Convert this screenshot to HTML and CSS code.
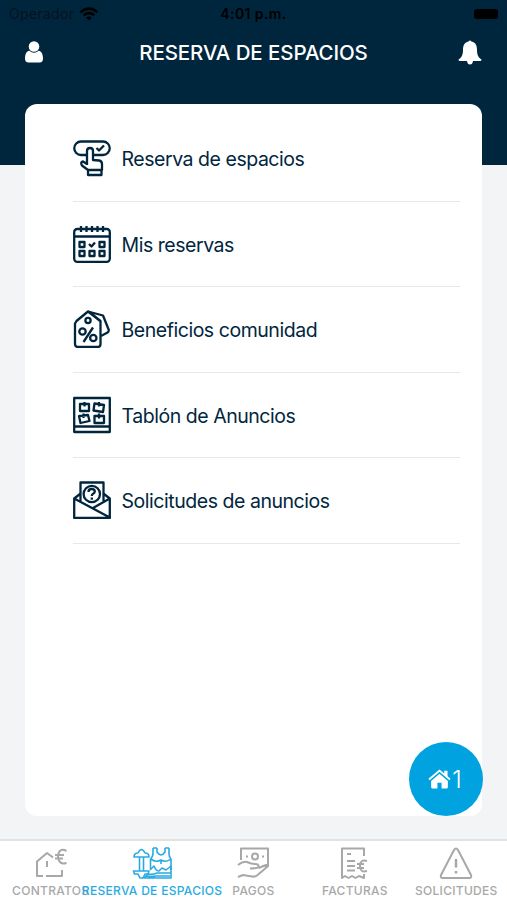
FILE: index.html
```html
<!DOCTYPE html>
<html lang="es">
<head>
    <meta charset="UTF-8">
    <meta name="viewport" content="width=device-width, initial-scale=1.0">
    <title>Reserva de espacios</title>
    <link rel="stylesheet" href="styles.css">
</head>
<body>
    <div class="app">
        <header class="header">
            <div class="status-bar">
                <div class="carrier">
                    <span>Operador</span>
                    <svg width="20" height="14" viewBox="0 0 20 14" fill="none" stroke="#000" stroke-width="2.5">
                        <path d="M1.5 5.2Q10-2 18.500 5.200M4.700 8.300Q10 4 15.300 8.300"/>
                        <path d="M7 10.500Q10 8.500 13 10.500L10 13.500Z" fill="#000" stroke="none"/>
                    </svg>
                </div>
                <span class="clock">4:01 p.m.</span>
                <span class="battery"></span>
            </div>
            <div class="title-bar">
                <a href="#" class="header-link">
                    <svg width="18" height="22" viewBox="0 0 18 22" fill="#fff">
                        <circle cx="9" cy="5.500" r="5.300"/>
                        <path d="M4.300 9.700Q9 13.600 13.700 9.700C17 10.200 18 14 18 17.500Q18 21.500 14.500 21.500H3.500Q0 21.500 0 17.500C0 14 1 10.200 4.300 9.700Z"/>
                    </svg>
                </a>
                <h1>RESERVA DE ESPACIOS</h1>
                <a href="#" class="header-link">
                    <svg width="24" height="25" viewBox="0 0 24 25" fill="#fff">
                        <path d="M10.500 1.500Q12-.5 13.500 1.500C18 2.500 19 6 19 10C19 15 20.500 17.500 23.500 19.500Q23.500 21 22 21H15Q14.500 24.500 12 24.500Q9.500 24.500 9 21H2Q.5 21 .5 19.500C3.500 17.500 5 15 5 10C5 6 6 2.500 10.500 1.500Z"/>
                    </svg>
                </a>
            </div>
        </header>

        <main class="card">
            <nav class="menu">
                <a href="#" class="menu-item">
                    <svg class="menu-icon" viewBox="0 0 38 38">
                        <path d="M14 16H8A6.700 6.700 0 0 1 8 2.500H30A6.700 6.700 0 0 1 30 16H20"/>
                        <path d="M23.500 9L26 11.500L31 6.500"/>
                        <path d="M14 26V12Q14 9 17 9Q20 9 20 12V21L26 21.500Q29 22 29 25V31H15L9 26.500Q7 23 10 22.500L14 25M15 31V36H28.500V31"/>
                    </svg>
                    <span>Reserva de espacios</span>
                </a>
                <a href="#" class="menu-item">
                    <svg class="menu-icon" viewBox="0 0 38 38">
                        <rect x="1.200" y="4" width="35.600" height="32.800" rx="3"/>
                        <path d="M1 11.500H37M8 1V7M13.500 1V7M19 1V7M24.500 1V7M30 1V7"/>
                        <path d="M6.500 17H11.500V22H6.500ZM26.500 17H31.500V22H26.500ZM6.500 26H11.500V31H6.500ZM16.500 26H21.500V31H16.500ZM26.500 26H31.500V31H26.500ZM16 19L18.500 21.500L22 17.500"/>
                    </svg>
                    <span>Mis reservas</span>
                </a>
                <a href="#" class="menu-item">
                    <svg class="menu-icon" viewBox="0 0 38 38">
                        <path d="M3.500 11L15 1.500L27.500 11V34Q27.500 37 24.500 37H5Q2 37 2 34V13.500Z"/>
                        <path d="M15 1.500L30 5.500L35.800 20Q36 21.500 34.500 22.500L28 26M18 3L27 11"/>
                        <circle cx="15" cy="10.500" r="2.600"/>
                        <circle cx="9.500" cy="21.500" r="3.200"/>
                        <circle cx="20.300" cy="28" r="3.200"/>
                        <path d="M20 17.500L10.500 32"/>
                    </svg>
                    <span>Beneficios comunidad</span>
                </a>
                <a href="#" class="menu-item">
                    <svg class="menu-icon" viewBox="0 0 38 38">
                        <path d="M1.200 2H36.800V36H1.200ZM1 30.500H37"/>
                        <path d="M7 8H16V15H7ZM21.500 7.500L31 9L30 16L20.500 14.500ZM6 20L15 19L16.500 25L7.500 27ZM21.500 20H31V27H21.500ZM11.500 6V10.500M26 6V10.500M10.500 17.500V22M26 17.500V22.500"/>
                    </svg>
                    <span>Tablón de Anuncios</span>
                </a>
                <a href="#" class="menu-item">
                    <svg class="menu-icon" viewBox="0 0 38 38">
                        <path d="M7.500 20V1.500H30.500V20M7 13L1.200 17.500V37H36.800V17.500L31 13M1.200 17.500L36.800 36.500M36.800 17.500L20 27"/>
                        <circle cx="18.800" cy="13" r="8.200"/>
                        <path d="M15.500 11Q15.500 8 18.500 8Q21.800 8 21.800 10.500Q21.800 12 19.800 13Q18.800 13.500 18.800 15M18.800 16.500V18.700"/>
                    </svg>
                    <span>Solicitudes de anuncios</span>
                </a>
            </nav>
        </main>

        <a href="#" class="home-button">
            <svg width="23" height="20" viewBox="0 0 22 19" fill="#fff">
                <path d="M11 4.500L19 11.300V17.500Q19 18.500 18 18.500H13V13H9V18.500H4Q3 18.500 3 17.500V11.300Z"/>
                <path d="M1 10L11 1.500L21 10" fill="none" stroke="#fff" stroke-width="1.800"/>
                <path d="M15.500 1.500H18.700V8L15.500 5.300Z"/>
            </svg>
            <span>1</span>
        </a>

        <footer class="tab-bar">
            <a href="#" class="tab">
                <svg class="tab-icon" viewBox="0 0 36 34">
                    <path d="M10 30H4V15.500L14 7L20 11.500M13 30H29V24M14 15V21"/>
                    <path d="M33.500 5Q26 1 25 10.500Q26 19.500 33.500 17M22 9H31M22 12.500H30"/>
                </svg>
                <span>CONTRATOS</span>
            </a>
            <a href="#" class="tab active">
                <svg class="tab-icon tab-icon-wide" viewBox="0 0 40 34">
                    <path d="M2 11Q2 7 6 7Q9.500 0 13 7Q17 7 17 11ZM7.500 11V25M11.500 11V25M1.500 25H17L16 28H13L11 32H8L6 28H2.500Z"/>
                    <path d="M21 2V7Q21 11 18.500 13V23M25 2V6Q29 12 33 6V2M37 2V8Q37 11 39 13V24M18.500 13Q24 17 29 14Q34 17 39 13M21 2H25M33 2H37M29 14V18"/>
                    <path d="M18 24L22 20Q24 25 27 25L30 22L34 24L39 20V32H12L16 28Q21 29 25 27H39M14 30Q20 31 24 30H38"/>
                </svg>
                <span>RESERVA DE ESPACIOS</span>
            </a>
            <a href="#" class="tab">
                <svg class="tab-icon" viewBox="0 0 36 34">
                    <path d="M6 14V2.500H33V20H27"/>
                    <circle cx="20" cy="10.500" r="3"/>
                    <path d="M11 10.500H13M27 10.500H29M3 19Q8 15 12 16Q16 18 20 18Q24 18 23.500 20.500Q23 22.500 15 22.500M23.500 22L31 19Q34 19 32 21L22 29.500Q20 31 17 30.500L8 29L3 31"/>
                </svg>
                <span>PAGOS</span>
            </a>
            <a href="#" class="tab">
                <svg class="tab-icon" viewBox="0 0 36 34">
                    <path d="M27 10V2.500H5V32L8 30L11.500 32L15 30L18.500 32L22 30L27 32V28M10 8H14M10 15H18M10 20H18M10 24.500H18"/>
                    <path d="M30 15Q23 13 23 20Q23 27 30 25M20 18H27M20 22H27"/>
                </svg>
                <span>FACTURAS</span>
            </a>
            <a href="#" class="tab">
                <svg class="tab-icon" viewBox="0 0 36 34">
                    <path d="M16 4Q18 1 20 4L33 29Q34 32 31 32H5Q2 32 3 29Z"/>
                    <path d="M18 13V21.500M18 25V27.500" stroke-width="2.500"/>
                </svg>
                <span>SOLICITUDES</span>
            </a>
        </footer>
    </div>
</body>
</html>
```

FILE: styles.css
```css
* {
    box-sizing: border-box;
}
body {
    margin: 0;
    font-family: Inter, Roboto, sans-serif;
    color: #00263e;
    background-color: #f2f4f6;
}
a {
    color: inherit;
    text-decoration: none;
}
svg {
    display: block;
}
.app {
    position: relative;
    height: 900px;
    display: flex;
    flex-direction: column;
    overflow: hidden;
}
.header {
    height: 165px;
    flex-shrink: 0;
    background-color: #00263e;
}
.status-bar {
    height: 27px;
    padding: 0 9px;
    display: grid;
    grid-template-columns: 1fr auto 1fr;
    align-items: center;
    font-size: 14px;
    color: #000;
}
.carrier {
    display: flex;
    align-items: center;
    gap: 5px;
}
.carrier span {
    color: #05121d;
    letter-spacing: 0.3px;
}
.clock {
    font-weight: 600;
    letter-spacing: 0.4px;
}
.battery {
    justify-self: end;
    width: 24px;
    height: 10px;
    border-radius: 3px;
    background-color: #000;
}
.title-bar {
    height: 50px;
    padding: 0 25px;
    display: grid;
    grid-template-columns: 1fr auto 1fr;
    align-items: center;
    color: #fff;
}
.title-bar h1 {
    margin: 0;
    padding-top: 1px;
    font-size: 20.5px;
    font-weight: 500;
    letter-spacing: -0.1px;
}
.header-link:last-child {
    justify-self: end;
}
.card {
    width: 457px;
    height: 712px;
    margin: -61px auto 0;
    padding: 12px 22px 0 47.5px;
    flex-shrink: 0;
    border-radius: 12px;
    background-color: #fff;
}
.menu-item {
    height: 85.5px;
    display: flex;
    align-items: center;
    gap: 11px;
    border-bottom: 1px solid #e6e8ea;
    font-size: 19.5px;
    letter-spacing: -0.46px;
}
.menu-item span {
    padding-top: 2px;
}
.menu-icon {
    width: 38px;
    height: 38px;
    fill: none;
    stroke: #00263e;
    stroke-width: 2.3;
    stroke-linejoin: round;
}
.home-button {
    position: absolute;
    right: 24px;
    bottom: 84px;
    width: 74px;
    height: 74px;
    padding-right: 2px;
    display: flex;
    justify-content: center;
    align-items: center;
    gap: 1px;
    border-radius: 50%;
    background-color: #00a3e0;
    color: #fff;
    font-size: 24px;
    font-weight: 300;
}
.tab-bar {
    height: 61px;
    margin-top: auto;
    display: grid;
    grid-template-columns: repeat(5, 1fr);
    border-top: 2px solid #e0e2e4;
    background-color: #fff;
    color: #a8a8a8;
}
.tab {
    min-width: 0;
    padding-top: 5px;
    display: flex;
    flex-direction: column;
    align-items: center;
    gap: 3px;
    font-size: 12px;
    font-weight: 500;
    line-height: 15px;
    letter-spacing: 0.3px;
    white-space: nowrap;
}
.tab-icon {
    width: 36px;
    height: 34px;
    fill: none;
    stroke: currentColor;
    stroke-width: 2;
    stroke-linejoin: round;
}
.tab-icon-wide {
    width: 40px;
    stroke-width: 1.6;
}
.active {
    color: #29abe2;
}
```
